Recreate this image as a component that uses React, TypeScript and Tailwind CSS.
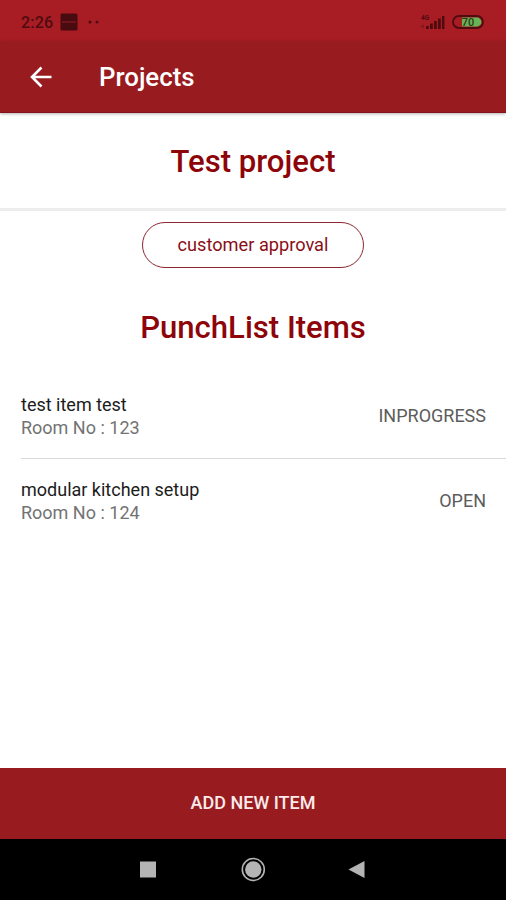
type PunchItem = {
  id: number;
  title: string;
  room: string;
  status: string;
};

const items: PunchItem[] = [
  { id: 1, title: 'test item test', room: '123', status: 'INPROGRESS' },
  { id: 2, title: 'modular kitchen setup', room: '124', status: 'OPEN' },
];

function StatusBar() {
  return (
    <div className="flex h-[41px] shrink-0 items-center justify-between bg-[#a81c24] pt-[3px] pr-[22px] pl-[21px] text-[#4f0b10]">
      <div className="flex items-center">
        <span className="mt-[2px] w-[33px] text-[16px] leading-5 font-medium tracking-[0.2px]">2:26</span>
        <svg className="ml-[6px]" width="18" height="18" viewBox="0 0 18 18">
          <rect x="0.5" y="0.5" width="17" height="17" rx="1.5" fill="#480b10" />
          <path d="M2 9h14" stroke="#7c171d" strokeWidth="1.5" />
        </svg>
        <svg className="ml-[10px]" width="12" height="4" viewBox="0 0 12 4" fill="#4f0b10">
          <circle cx="2" cy="2" r="1.5" />
          <circle cx="9" cy="2" r="1.5" />
        </svg>
      </div>
      <div className="flex items-center">
        <svg width="27" height="16" viewBox="0 0 27 16" fill="#4f0b10">
          <text x="2" y="5.5" fontSize="6.5" fontWeight="700">4G</text>
          <path d="M1 13l4-3v4z" opacity="0.35" />
          <rect x="7" y="12" width="2.8" height="3" />
          <rect x="11" y="9.5" width="2.8" height="5.5" />
          <rect x="15" y="7" width="2.8" height="8" />
          <rect x="19" y="4.5" width="2.8" height="10.5" />
          <rect x="23" y="2" width="2.4" height="13" />
        </svg>
        <svg className="ml-[6px]" width="32" height="14" viewBox="0 0 32 14">
          <rect x="1" y="1" width="30" height="12" rx="6" fill="#a81c24" stroke="#4f0b10" strokeWidth="1.8" />
          <path d="M10 2.6h15a4.4 4.4 0 0 1 0 8.8H10z" fill="#67b455" />
          <text x="16" y="11" textAnchor="middle" fontSize="11" fontWeight="500" fill="#35351a">70</text>
        </svg>
      </div>
    </div>
  );
}

function NavBar() {
  return (
    <div className="h-[61px] shrink-0 bg-black">
      <svg className="block" width="506" height="61" viewBox="0 0 506 61" fill="#b4b4b4">
        <rect x="140" y="22.5" width="16" height="16" />
        <circle cx="253.3" cy="30.5" r="8.2" />
        <circle cx="253.3" cy="30.5" r="11" fill="none" stroke="#b4b4b4" strokeWidth="1.6" />
        <path d="M348.5 30.5L364.5 22v17z" />
      </svg>
    </div>
  );
}

export default function App() {
  return (
    <div className="flex h-[900px] w-[506px] flex-col overflow-hidden bg-white font-[Roboto,sans-serif]">
      <StatusBar />
      <header className="z-10 flex h-[72px] shrink-0 items-center border-b border-[#82131a] bg-[#981b1f] pl-[30px] text-white shadow-[0_1px_3px_rgba(0,0,0,0.3)]">
        <svg width="22" height="22" viewBox="0 0 22 22" fill="none" stroke="currentColor" strokeWidth="2.6">
          <path d="M21.5 11H3M11.5 1.5L2 11l9.5 9.5" />
        </svg>
        <span className="ml-[47px] text-[25.8px] leading-8 font-medium">Projects</span>
      </header>

      <main className="flex flex-1 flex-col">
        <div className="flex h-[98px] items-center justify-center border-b-3 border-[#ededed] text-[#8e0509]">
          <h1 className="pt-[2px] text-[31.1px] leading-9 font-medium">Test project</h1>
        </div>

        <div className="mt-[11px] flex justify-center">
          <button className="h-[46px] w-[222px] rounded-full border border-[#8c2630] pb-px text-[18.2px] text-[#8a0e18]">
            customer approval
          </button>
        </div>

        <h2 className="mt-[42px] text-center text-[31.1px] leading-9 font-medium text-[#8e0509]">PunchList Items</h2>

        <ul className="mt-[28px] pl-[21px]">
          {items.map((item) => (
            <li
              key={item.id}
              className="flex h-[85px] items-center justify-between border-b border-[#d9d9d9] pr-[20px] last:h-[84px] last:border-b-0"
            >
              <div className="pb-px text-[18px] leading-[23px]">
                <p className="text-[#1c1c1c]">{item.title}</p>
                <p className="text-[#737373]">Room No : {item.room}</p>
              </div>
              <span className="pb-[2px] text-[18px] text-[#5c5c5c]">{item.status}</span>
            </li>
          ))}
        </ul>
      </main>

      <button className="h-[71px] shrink-0 bg-[#981b1f] pb-[2px] text-[18px] font-medium text-[#fbeaea]">ADD NEW ITEM</button>
      <NavBar />
    </div>
  );
}
